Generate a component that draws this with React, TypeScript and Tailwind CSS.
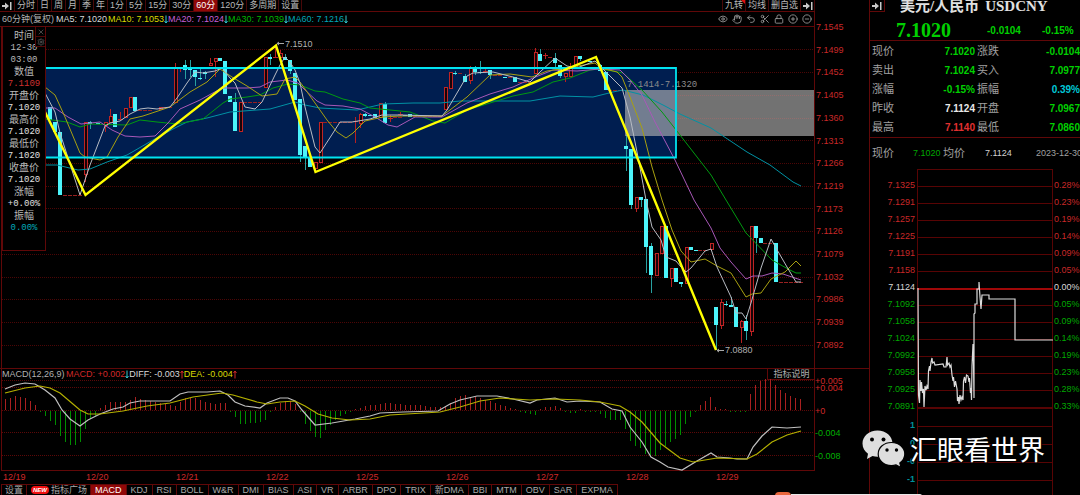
import { CircleMinus, CirclePlus, Eye, Hand, Lock, Scissors, Settings, Undo2, X } from 'lucide-react';

const PERIODS = ['分时', '日', '周', '月', '季', '年', '1分', '5分', '15分', '30分', '60分', '120分', '多周期', '设置'];

const AVERAGES = [
  { label: 'MA5: 7.1020', color: 'text-[#d8d8d8]', arrow: false },
  { label: 'MA10: 7.1053', color: 'text-[#d8d800]', arrow: true },
  { label: 'MA20: 7.1024', color: 'text-[#c860d8]', arrow: true },
  { label: 'MA30: 7.1039', color: 'text-[#00b800]', arrow: true },
  { label: 'MA60: 7.1216', color: 'text-[#00a8b8]', arrow: true },
];

const TOOLS = [
  { name: '显示', Icon: Eye },
  { name: '拖动', Icon: Hand },
  { name: '撤销', Icon: Undo2 },
  { name: '剪切', Icon: Scissors },
  { name: '锁定', Icon: Lock },
  { name: '放大', Icon: CirclePlus },
  { name: '缩小', Icon: CircleMinus },
];

const PRICE_AXIS = [
  '7.1545', '7.1499', '7.1452', '7.1405', '7.1360', '7.1313', '7.1266', '7.1219',
  '7.1173', '7.1126', '7.1079', '7.1032', '7.0986', '7.0939', '7.0892',
];

const GRID_Y = [49, 72, 95, 118, 140, 163, 186, 208, 231, 254, 277, 299, 322, 345];

const CURSOR_INFO = [
  { text: '时间', color: 'text-[#b8b8b8]' },
  { text: '12-30', color: 'text-[#b8b8b8]' },
  { text: '03:00', color: 'text-[#b8b8b8]' },
  { text: '数值', color: 'text-[#b8b8b8]' },
  { text: '7.1109', color: 'text-[#d03030]' },
  { text: '开盘价', color: 'text-[#b8b8b8]' },
  { text: '7.1020', color: 'text-[#e0e0e0]' },
  { text: '最高价', color: 'text-[#b8b8b8]' },
  { text: '7.1020', color: 'text-[#e0e0e0]' },
  { text: '最低价', color: 'text-[#b8b8b8]' },
  { text: '7.1020', color: 'text-[#e0e0e0]' },
  { text: '收盘价', color: 'text-[#b8b8b8]' },
  { text: '7.1020', color: 'text-[#e0e0e0]' },
  { text: '涨幅', color: 'text-[#b8b8b8]' },
  { text: '+0.00%', color: 'text-[#e0e0e0]' },
  { text: '振幅', color: 'text-[#b8b8b8]' },
  { text: '0.00%', color: 'text-[#00a8b8]' },
];

// x, body top, body bottom, wick top, wick bottom
type Candle = [number, number, number, number, number];

const FALLING: Candle[] = [
  [50, 107, 120, 107, 120], [55, 122, 132, 122, 132], [60, 132, 195, 132, 195], [90, 122, 124, 121, 129],
  [98, 123, 124, 123, 124], [115, 114, 127, 114, 127], [135, 97, 111, 97, 111], [185, 65, 70, 60, 79],
  [190, 69, 70, 60, 77], [195, 70, 77, 70, 86], [200, 78, 79, 67, 80], [205, 72, 74, 71, 79],
  [220, 58, 61, 58, 61], [225, 61, 94, 61, 94], [230, 96, 102, 96, 102], [235, 102, 131, 93, 131],
  [270, 57, 59, 54, 65], [285, 57, 60, 54, 60], [290, 60, 71, 60, 74], [295, 73, 100, 73, 100],
  [300, 99, 155, 99, 162], [305, 146, 157, 146, 170], [310, 157, 167, 157, 167], [365, 114, 116, 113, 117],
  [370, 115, 116, 115, 116], [375, 114, 118, 114, 118], [385, 104, 123, 102, 123], [405, 115, 116, 115, 116],
  [410, 114, 117, 114, 117], [455, 73, 74, 71, 75], [465, 76, 82, 74, 82], [475, 68, 72, 66, 75],
  [480, 72, 73, 61, 74], [490, 70, 75, 70, 79], [505, 77, 78, 77, 78], [515, 77, 82, 77, 82],
  [540, 54, 61, 49, 61], [555, 58, 63, 53, 67], [560, 65, 76, 65, 78], [580, 56, 59, 56, 61],
  [590, 61, 62, 61, 62], [600, 65, 71, 64, 71], [606, 72, 90, 72, 90], [626, 146, 149, 135, 171],
  [631, 149, 205, 149, 209], [641, 197, 200, 197, 207], [646, 199, 247, 199, 273], [651, 246, 275, 243, 293],
  [666, 226, 278, 226, 278], [676, 268, 282, 268, 282], [681, 282, 284, 282, 287], [691, 247, 250, 247, 250],
  [696, 250, 251, 250, 251], [716, 307, 325, 307, 350], [726, 304, 305, 301, 306], [731, 305, 307, 297, 307],
  [736, 307, 327, 307, 327], [746, 321, 331, 315, 340], [756, 226, 238, 226, 253], [761, 238, 243, 238, 243],
  [776, 243, 282, 243, 282],
];

const RISING: Candle[] = [
  [85, 122, 174, 122, 182], [105, 122, 125, 122, 132], [110, 116, 122, 109, 122], [120, 119, 120, 112, 120],
  [125, 108, 117, 108, 117], [130, 97, 107, 97, 107], [160, 107, 109, 107, 109], [175, 67, 102, 63, 102],
  [180, 67, 68, 67, 72], [210, 63, 65, 58, 66], [215, 58, 61, 58, 77], [240, 102, 131, 102, 131],
  [265, 57, 87, 57, 87], [275, 57, 58, 45, 58], [280, 53, 57, 50, 60], [315, 162, 168, 162, 168],
  [320, 122, 162, 122, 162], [355, 121, 122, 117, 143], [360, 114, 123, 113, 128], [380, 103, 117, 103, 117],
  [390, 118, 119, 115, 122], [400, 114, 115, 112, 116], [445, 87, 109, 87, 109], [450, 72, 88, 72, 88],
  [470, 68, 80, 66, 84], [485, 71, 72, 68, 73], [535, 52, 73, 48, 73], [545, 55, 56, 53, 59],
  [565, 73, 76, 73, 82], [570, 67, 76, 63, 76], [575, 56, 67, 56, 67], [636, 197, 208, 197, 212],
  [656, 253, 275, 253, 275], [661, 226, 253, 226, 253], [671, 268, 278, 268, 287], [686, 247, 283, 247, 283],
  [711, 243, 249, 243, 249], [721, 302, 325, 299, 329], [741, 321, 327, 320, 343], [751, 226, 331, 226, 336],
];

// runs of unchanged prices: x start, x end, y
const FLAT = [
  [63, 82, 195], [138, 153, 110], [163, 173, 107], [243, 262, 102], [323, 352, 122], [393, 403, 117],
  [413, 442, 116], [458, 463, 73], [493, 503, 75], [508, 513, 77], [518, 531, 82], [548, 553, 57],
  [608, 623, 90], [698, 708, 250], [763, 774, 243], [779, 803, 282],
];

const MA_LINES = [
  {
    stroke: '#0092a4',
    points:
      '45,165 57,165 78,170 90,169 107,162 127,155 153,140 173,129 187,122 207,118 230,112 270,109 295,102 305,105 320,108 357,110 383,104 413,103 440,103 460,101 490,101 530,101 560,96 593,97 613,92 623,90 643,95 663,105 680,114 711,128 747,152 770,165 793,182 801,186',
  },
  {
    stroke: '#009a10',
    points:
      '45,119 67,122 80,127 90,124 127,125 140,120 157,122 177,124 203,119 223,103 230,99 247,97 260,95 273,88 288,84 300,85 315,91 325,92 343,99 360,103 370,108 410,112 433,121 445,123 467,110 490,103 513,96 533,92 553,82 570,78 590,70 600,69 613,71 623,73 642,90 662,112 680,135 711,175 726,200 746,233 772,260 788,269 796,273 801,273',
  },
  {
    stroke: '#a858b8',
    points:
      '45,108 55,108 68,117 81,124 100,122 112,130 125,136 140,137 155,136 168,123 180,109 200,100 222,88 247,88 260,87 270,82 287,80 298,83 305,90 317,101 325,105 343,106 360,109 375,117 388,125 397,127 415,117 442,117 467,103 490,94 513,87 533,78 553,70 577,71 600,69 620,70 630,80 642,95 655,122 675,160 694,200 711,228 720,248 731,262 746,279 753,276 762,276 772,273 783,274 801,280',
  },
  {
    stroke: '#a8a010',
    points:
      '45,87 55,95 65,117 80,153 85,157 100,160 107,157 118,137 130,119 143,116 170,107 190,92 207,82 220,69 232,77 247,86 262,96 277,94 285,79 295,77 300,82 315,103 327,120 337,132 346,138 353,133 365,121 383,117 400,116 442,116 467,97 490,75 510,74 532,77 547,71 567,68 595,63 601,68 617,72 622,77 630,97 642,128 652,167 662,200 672,230 681,251 691,262 705,259 717,266 731,273 746,297 752,294 761,293 771,279 785,272 796,261 801,266',
  },
  {
    stroke: '#b8bcc4',
    points:
      '45,93 55,112 60,133 80,195 90,165 105,126 110,123 120,121 130,114 140,109 148,108 157,109 170,107 177,98 187,83 195,72 203,73 215,71 222,68 230,78 235,83 240,95 245,107 255,109 262,102 275,75 280,65 285,57 290,62 295,70 300,83 305,107 315,147 320,153 333,133 340,122 352,122 370,119 382,115 400,115 442,116 447,110 467,76 473,73 493,72 513,77 530,82 540,72 555,58 567,66 577,68 595,61 601,67 622,88 630,117 638,157 646,200 652,227 661,240 666,257 676,261 681,267 686,272 691,268 705,251 711,249 717,267 731,297 736,313 742,313 746,319 751,303 761,268 771,239 776,248 787,267 796,282 801,282',
  },
];

// histogram heights in 5px steps from the left edge
const MACD_BARS = [
  11, 12, 14, 13, 12, 9, 5, -1, -5, -10, -14, -25, -31, -34, -34, -31, -18, -8, -5, 2, 5, 8, 8, 8, 8, 10, 13, 11, 10, 9,
  8, 7, 6, 5, 4, 8, 12, 12, 12, 10, 8, 7, 6, 7, 7, -1, -6, -13, -13, -12, -12, -11, -9, -1, 3, 7, 9, 9, 6, -1, -13, -20,
  -26, -27, -19, -14, -9, -5, -3, -1, 1, 2, 4, 5, 5, 6, 7, 7, 6, 6, 5, 5, 5, 5, 4, 3, 3, 3, 4, 7, 12, 14, 15, 13, 13,
  12, 10, 9, 7, 5, 4, 2, 1, -1, -2, -3, -4, 1, 3, 3, 4, 2, -1, -2, -2, 1, -1, -1, -1, -3, -7, -9, -9, -9, -18, -30,
  -35, -37, -43, -46, -45, -39, -35, -31, -28, -24, -13, -6, -1, 5, 9, 13, 3, 1, 1, -1, -1, -1, -1, 16, 25, 29, 31, 31,
  25, 20, 17, 14, 12, 11,
];

const DIFF_POINTS =
  '5,389 15,385 25,383 35,384 45,390 55,398 62,410 70,419 80,426 88,420 100,414 113,409 123,407 130,403 140,401 170,401 180,394 188,392 207,392 220,391 228,395 235,402 245,406 260,408 267,403 280,398 288,398 295,401 302,410 315,425 332,423 355,419 370,416 380,413 403,412 438,411 450,404 460,400 477,396 497,396 513,399 530,403 537,400 555,398 567,402 580,401 600,402 612,409 622,411 630,427 642,442 651,457 660,462 668,467 682,470 697,461 711,453 717,457 730,458 737,459 747,459 753,447 762,436 772,427 787,428 801,427';

const DEA_POINTS =
  '5,393 25,388 40,386 50,388 60,393 80,410 88,414 100,414 123,411 147,406 170,403 193,397 222,393 233,395 257,402 267,404 280,402 295,401 305,406 318,414 332,418 350,420 370,419 390,415 440,412 460,407 480,401 500,398 530,400 555,399 580,400 600,402 620,406 630,412 642,422 660,443 680,458 693,462 717,458 747,459 757,454 772,442 787,435 801,431';

const MACD_AXIS = [
  { y: 380, label: '+0.005', fill: '#d02828' },
  { y: 387, label: '+0.004', fill: '#d02828' },
  { y: 410, label: '+0', fill: '#d02828' },
  { y: 432, label: '-0.004', fill: '#00b000' },
  { y: 455, label: '-0.008', fill: '#00b000' },
];

const DATES = ['12/19', '12/20', '12/21', '12/22', '12/25', '12/26', '12/27', '12/28', '12/29'];

const INDICATORS = [
  'MACD', 'KDJ', 'RSI', 'BOLL', 'W&R', 'DMI', 'BIAS', 'ASI', 'VR', 'ARBR', 'DPO', 'TRIX', '新DMA', 'BBI', 'MTM', 'OBV',
  'SAR', 'EXPMA',
];

const QUOTES = [
  ['现价', '7.1020', 'text-[#00d000]', '涨跌', '-0.0104', 'text-[#00d000]'],
  ['卖出', '7.1024', 'text-[#00d000]', '买入', '7.0977', 'text-[#00d000]'],
  ['涨幅', '-0.15%', 'text-[#00d000]', '振幅', '0.39%', 'text-[#00c8d8]'],
  ['昨收', '7.1124', 'text-[#e8e8e8]', '开盘', '7.0967', 'text-[#00d000]'],
  ['最高', '7.1140', 'text-[#e03030]', '最低', '7.0860', 'text-[#00d000]'],
];

const INTRADAY_AXIS = [
  ['7.1325', '0.28%', 'text-[#c82828]'],
  ['7.1291', '0.23%', 'text-[#c82828]'],
  ['7.1257', '0.19%', 'text-[#c82828]'],
  ['7.1225', '0.14%', 'text-[#c82828]'],
  ['7.1191', '0.09%', 'text-[#c82828]'],
  ['7.1158', '0.05%', 'text-[#c82828]'],
  ['7.1124', '0.00%', 'text-[#d8d8d8]'],
  ['7.1092', '0.05%', 'text-[#00a800]'],
  ['7.1058', '0.09%', 'text-[#00a800]'],
  ['7.1024', '0.14%', 'text-[#00a800]'],
  ['7.0992', '0.19%', 'text-[#00a800]'],
  ['7.0958', '0.23%', 'text-[#00a800]'],
  ['7.0925', '0.28%', 'text-[#00a800]'],
  ['7.0891', '0.33%', 'text-[#00a800]'],
];

const INTRADAY_POINTS =
  '918,287 918.500,394 919.500,402 920,379 921,390 921.500,381 922.500,392 923.500,388 924,406 925,385 926,389 927,385 928,388 928.500,370 929.500,365 930,370 931,361 932,357 932.500,362 934,361 935,364 943,363 944,366 946,366 947,356 947.500,364 949,362 950,366 951,364 952,374 953,380 953.500,376 954.500,386 955.500,380 957,388 957.500,400 958.500,396 959,403 960,394 961,399 962,396 963,399 963.500,380 964.500,376 965.500,382 966.500,374 968,375 969,381 969.500,377 970.500,392 971,387 971.500,399 972,365 973,343 973.500,360 974,397 974,313 975,312 975,303 977,303 977,288 979,288 979,281 980,296 981,308 982,294 989,294 989,298 1015,298 1015,339 1053,339';

const CollapseIcon = () => (
  <svg width="10" height="8" viewBox="0 0 10 8" fill="#c8c8c8">
    <path d="M0 3h3V0.5L7 4 3 7.5V5H0zM8 0h1.5v8H8z" />
  </svg>
);

const TrendArrow = ({ up = false }: { up?: boolean }) => (
  <svg width="4" height="9" viewBox="0 0 4 9" fill="none" stroke={up ? '#d02828' : '#30c8d0'} className="shrink-0 self-center">
    <path d={up ? 'M2 8.500V1M.5 3L2 1 3.500 3' : 'M2 .5V8M.5 6L2 8 3.500 6'} />
  </svg>
);

const CandleShape = ({ candle, up }: { candle: Candle; up: boolean }) => {
  const [x, top, bottom, high, low] = candle;
  const flat = bottom - top < 2;
  return (
    <g>
      <rect x={x} y={high} width="1" height={low - high} fill={up ? '#b82020' : '#28a0a0'} />
      {up && !flat ? (
        <rect x={x - 1} y={top} width="3" height={bottom - top} fill="#180408" stroke="#c02424" />
      ) : (
        <rect x={x - 2} y={top} width={up ? 5 : 4} height={bottom - top} fill={up ? '#c02424' : '#4cf4fa'} />
      )}
    </g>
  );
};

const PriceChart = () => (
  <svg viewBox="0 27 814 341" className="block w-full" role="img" aria-label="USDCNY 60分钟K线">
    <g shapeRendering="crispEdges">
      {GRID_Y.map((y) => (
        <line key={y} x1="2" x2="814" y1={y + 0.5} y2={y + 0.5} stroke="#4c0606" strokeDasharray="1 1" />
      ))}
      <rect x="46" y="68" width="630" height="89" fill="#001e50" />
      {FALLING.map((c) => (
        <CandleShape key={c[0]} candle={c} up={false} />
      ))}
      {RISING.map((c) => (
        <CandleShape key={c[0]} candle={c} up />
      ))}
      {FLAT.map(([from, to, y]) => (
        <line key={from} x1={from} x2={to} y1={y + 0.5} y2={y + 0.5} stroke="#982020" strokeDasharray="4 1" />
      ))}
    </g>
    <text x="627" y="87" fontSize="9" fill="#8c8c8c" className="font-['Liberation_Mono',monospace]">
      7.1414-7.1320
    </text>
    <rect x="625" y="90" width="189" height="46" fill="#b8b8b8" fillOpacity="0.62" />
    <g stroke="#a05858" strokeOpacity="0.25" strokeDasharray="1 1" shapeRendering="crispEdges">
      <line x1="676" x2="814" y1="95.5" y2="95.5" />
      <line x1="676" x2="814" y1="118.5" y2="118.5" />
    </g>
    {MA_LINES.map((line) => (
      <polyline key={line.stroke} points={line.points} fill="none" stroke={line.stroke} />
    ))}
    <path d="M46 68H676V157.5H46" fill="none" stroke="#00e4f0" strokeWidth="1.8" />
    <polyline
      points="45,112 85.5,195 276,45.5 315.5,172 596,57 716,350"
      fill="none"
      stroke="#ffff00"
      strokeWidth="2.4"
    />
    <g stroke="#a8a8a8">
      <path d="M277 43.5H284M279 42L277 43.5 279 45M717 350.5H724M719 349L717 350.5 719 352" fill="none" />
    </g>
    <g fontSize="9" fill="#b0b0b0">
      <text x="285" y="47">7.1510</text>
      <text x="725" y="353">7.0880</text>
    </g>
    <path d="M1.5 27V368" stroke="#600808" />
  </svg>
);

const MacdChart = () => (
  <svg viewBox="0 380 869 91" className="block w-full overflow-visible" role="img" aria-label="MACD">
    <g shapeRendering="crispEdges">
      {MACD_AXIS.map(({ y }) => (
        <line key={y} x1="2" x2="814" y1={y + 0.5} y2={y + 0.5} stroke="#5c0808" strokeDasharray="1 1" />
      ))}
      {MACD_BARS.map((value, i) => (
        <rect
          key={i}
          x={5 + i * 5}
          y={value > 0 ? 410 - value : 411}
          width="1"
          height={Math.abs(value)}
          fill={value > 0 ? '#a82020' : '#008c00'}
        />
      ))}
      <path d="M1.5 369V470.5H814.5V369" fill="none" stroke="#600808" />
    </g>
    <polyline points={DIFF_POINTS} fill="none" stroke="#c0c0c0" strokeWidth="1.2" />
    <polyline points={DEA_POINTS} fill="none" stroke="#b4b000" strokeWidth="1.2" />
    {MACD_AXIS.map(({ y, label, fill }) => (
      <text key={y} x="815" y={y + 4} fontSize="9" fill={fill}>
        {label}
      </text>
    ))}
  </svg>
);

const CursorPanel = () => (
  <aside className="absolute left-0.5 top-0 w-[44px] border border-t-0 border-[#600808] bg-black pb-4 pt-[3px] text-center leading-3">
    {CURSOR_INFO.map(({ text, color }, i) => (
      <div
        key={i}
        className={`${color} ${/\d/.test(text) ? "font-['Liberation_Mono',monospace] text-[9px]" : 'text-[10px]'} h-3 leading-3`}
      >
        {text}
      </div>
    ))}
    <div className="absolute right-0 top-0 flex flex-col text-[#686868]">
      <button aria-label="关闭" className="flex size-2.5 items-center justify-center border-b border-l border-[#500808] bg-black">
        <X size={8} />
      </button>
      <button aria-label="设置" className="flex size-2.5 items-center justify-center border-b border-l border-[#500808] bg-black">
        <Settings size={8} />
      </button>
    </div>
  </aside>
);

const Toolbar = () => (
  <nav className="mr-[54px] flex h-3 items-stretch border-b border-[#600808] text-[9px] leading-[11px] text-[#b8b8b8]">
    <button aria-label="收起" className="flex w-[15px] items-center justify-center border-r border-[#480808]">
      <CollapseIcon />
    </button>
    {PERIODS.map((p) => (
      <button
        key={p}
        className={`whitespace-nowrap border-r border-[#480808] px-0.5 ${p === '60分' ? 'bg-[#900808] text-white' : ''}`}
      >
        {p}
      </button>
    ))}
    <div className="ml-auto flex">
      <button className="relative border-x border-[#480808] px-0.5">
        九转
        <span className="absolute right-0 top-0 border-l-4 border-t-4 border-l-transparent border-t-[#e01010]" />
      </button>
      <button className="border-r border-[#480808] px-0.5">均线</button>
      <button className="border-r border-[#480808] px-0.5">删自选</button>
      <button aria-label="展开" className="flex w-3.5 items-center justify-center border-r border-[#480808]">
        <CollapseIcon />
      </button>
    </div>
  </nav>
);

const IndicatorTabs = () => (
  <nav className="flex h-[11px] text-[9px] leading-[11px] text-[#a8a8a8]">
    <button className="ml-px border-x border-t border-[#600808] px-[3px] leading-[10px]">设置</button>
    <button className="flex items-center gap-0.5 border-r border-t border-[#600808] pl-1 pr-[3px] leading-[10px]">
      <span className="rounded-sm bg-[#f01010] px-0.5 text-[6px] font-bold italic leading-[8px] text-white">NEW</span>
      指标广场
    </button>
    {INDICATORS.map((name) => (
      <button
        key={name}
        className={`whitespace-nowrap border-r border-t border-[#600808] px-1 leading-[10px] ${name === 'MACD' ? 'bg-[#900808] text-white' : ''}`}
      >
        {name}
      </button>
    ))}
  </nav>
);

const QuotePanel = () => (
  <section className="flex w-[211px] shrink-0 flex-col overflow-hidden border-l border-[#600808]">
    <header className="h-[41px] border-b border-[#600808]">
      <div className="flex h-3 items-center">
        <button aria-label="收起" className="flex h-3 w-[15px] items-center justify-center border-b border-r border-[#600808]">
          <CollapseIcon />
        </button>
        <h1 className="ml-[15px] flex gap-1.5 whitespace-nowrap font-['Liberation_Serif','Noto_Sans_CJK_SC',serif] text-[15px] font-bold leading-3 text-[#e0e0e0]">
          <span>美元/人民币</span>
          <span>USDCNY</span>
        </h1>
      </div>
      <div className="flex items-center pt-1.5 text-[10px] font-bold text-[#00d000]">
        <span className="w-[117px] pl-[26px] font-['Liberation_Serif',serif] text-[20px] leading-6">7.1020</span>
        <span className="w-[55px]">-0.0104</span>
        <span>-0.15%</span>
      </div>
    </header>
    <div className="border-b border-[#600808] pl-0.5 pt-px">
      <table className="w-full table-fixed border-collapse">
        <tbody>
          {QUOTES.map(([label, value, color, label2, value2, color2]) => (
            <tr key={label} className="h-[19px] text-[10px] leading-[19px]">
              <th className="w-6 p-0 text-left text-[11px] font-normal text-[#a0a0a0]">{label}</th>
              <td className={`w-[79px] p-0 text-right font-bold ${color}`}>{value}</td>
              <th className="w-[25px] p-0 pl-0.5 text-left text-[11px] font-normal text-[#a0a0a0]">{label2}</th>
              <td className={`p-0 text-right font-bold ${color2}`}>{value2}</td>
            </tr>
          ))}
        </tbody>
      </table>
    </div>
    <div className="flex h-[31px] items-center whitespace-nowrap pl-0.5 text-[9px] text-[#a0a0a0]">
      <span className="w-[41px] shrink-0 text-[11px]">现价</span>
      <span className="w-[30px] shrink-0 text-[#00a800]">7.1020</span>
      <span className="w-[42px] shrink-0 text-[11px]">均价</span>
      <span className="w-[51px] shrink-0 text-[#d0d0d0]">7.1124</span>
      <span>2023-12-30</span>
    </div>
    <div className="flex text-[9px]">
      <div className="w-[47px] pr-0.5 pt-2 text-right">
        {INTRADAY_AXIS.map(([price, , color]) => (
          <div key={price} className={`h-[17px] leading-[17px] ${color}`}>
            {price}
          </div>
        ))}
        <div className="pt-px font-bold text-[#00909c]">
          <div className="h-[18px] leading-[18px]">1</div>
          <div className="h-[18px] leading-[18px]">0</div>
          <div className="h-[18px] leading-[18px]">-0</div>
          <div className="h-[18px] leading-[18px]">-1</div>
        </div>
      </div>
      <svg viewBox="917 168 136 327" className="block min-w-0 flex-1" role="img" aria-label="分时走势">
        <g stroke="#580404" shapeRendering="crispEdges">
          {INTRADAY_AXIS.map(([price], i) => (
            <line key={price} x1="917" x2="1053" y1={185.5 + i * 17} y2={185.5 + i * 17} />
          ))}
          {[425, 443, 461, 479].map((y) => (
            <line key={y} x1="917" x2="1053" y1={y + 0.5} y2={y + 0.5} />
          ))}
          <path d="M917.5 495V168.5H1052.5V495" fill="none" />
          <line x1="917" x2="1053" y1="287.5" y2="287.5" stroke="#a00808" strokeWidth="2" />
          <line x1="917" x2="1053" y1="407" y2="407" strokeWidth="2" />
        </g>
        <polyline points={INTRADAY_POINTS} fill="none" stroke="#dcdcdc" strokeWidth="1.2" />
      </svg>
      <div className="w-[27px] pl-px pt-2">
        {INTRADAY_AXIS.map(([price, percent, color]) => (
          <div key={price} className={`h-[17px] leading-[17px] ${color}`}>
            {percent}
          </div>
        ))}
      </div>
    </div>
  </section>
);

const Watermark = () => (
  <div className="absolute bottom-7 right-[35px] flex items-center gap-1 text-white">
    <svg width="44" height="38" viewBox="0 0 44 38">
      <g fill="#dedede">
        <path d="M15.500 .5C7 .5 .5 6.200 .5 13.500c0 4.500 2.300 8 5.500 10.300L5 29l5.500-3c1.600.5 3.300.7 5 .7 8.300 0 15-5.700 15-13S24 .5 15.500 .5z" />
        <path
          d="M29.500 12.500c-7.500 0-13.300 5-13.300 11.500S22 35.500 29.500 35.500c1.500 0 3-.2 4.500-.6l5 2.600-1.200-4.500c3-2.200 5-5.300 5-9 0-6.500-6-11.500-13.300-11.500z"
          stroke="#000"
          strokeWidth="1.2"
        />
      </g>
      <g fill="#000">
        <circle cx="10" cy="9.500" r="2" />
        <circle cx="21.500" cy="9.500" r="2" />
        <circle cx="25" cy="20" r="1.700" />
        <circle cx="34.500" cy="20" r="1.700" />
      </g>
    </svg>
    <span className="font-['Noto_Sans_CJK_SC',sans-serif] text-[27px] leading-9 [text-shadow:0_0_2px_#000,1px_1px_1px_#000,-1px_-1px_1px_#000]">
      汇眼看世界
    </span>
  </div>
);

export default function App() {
  return (
    <div className="relative flex min-h-screen overflow-hidden bg-black font-['Liberation_Sans','Noto_Sans_CJK_SC',sans-serif]">
      <main className="min-w-0 flex-1">
        <Toolbar />
        <div className="flex">
          <div className="min-w-0 flex-1 border-r border-[#600808]">
            <div className="flex h-[15px] items-center whitespace-nowrap border-b border-[#600808] pl-0.5 text-[9px] leading-[14px]">
              <span className="w-[54px] text-[#b0b0b0]">60分钟(复权)</span>
              {AVERAGES.map(({ label, color, arrow }) => (
                <span key={label} className={`flex ${arrow ? 'w-[60px]' : 'w-[52px]'} ${color}`}>
                  {label}
                  {arrow && <TrendArrow />}
                </span>
              ))}
              <div className="ml-auto flex gap-1 pr-0.5 text-[#a0a0a0]">
                {TOOLS.map(({ name, Icon }) => (
                  <button key={name} aria-label={name}>
                    <Icon size={10} />
                  </button>
                ))}
              </div>
            </div>
            <div className="relative">
              <PriceChart />
              <CursorPanel />
            </div>
          </div>
          <div className="flex w-[54px] flex-col justify-between pb-[17px] pl-px pt-[9px] text-[9px] text-[#c82828]">
            {PRICE_AXIS.map((price) => (
              <span key={price} className="h-3 leading-3">
                {price}
              </span>
            ))}
          </div>
        </div>
        <section className="border-t border-[#600808]">
          <div className="mr-[54px] flex h-[11px] whitespace-nowrap pl-0.5 text-[9px] leading-[11px]">
            <span className="w-16 text-[#b0b0b0]">MACD(12,26,9)</span>
            <span className="text-[#d02828]">MACD: +0.002</span>
            <TrendArrow />
            <span className="text-[#d8d8d8]">DIFF: -0.003</span>
            <TrendArrow up />
            <span className="text-[#d8d800]">DEA: -0.004</span>
            <TrendArrow up />
            <button className="ml-auto w-12 border-b border-l border-[#600808] leading-[10px] text-[#b0b0b0]">指标说明</button>
          </div>
          <MacdChart />
        </section>
        <div className="mr-[54px] grid h-[13px] grid-cols-[83fr_90fr_90fr_90fr_90fr_90fr_90fr_90fr_99fr] pl-[3px] text-[9px] leading-[13px] text-[#d02828]">
          {DATES.map((date) => (
            <span key={date}>{date}</span>
          ))}
        </div>
        <IndicatorTabs />
      </main>
      <QuotePanel />
      <Watermark />
      <div className="absolute bottom-0 left-[775px] flex items-end">
        <span className="h-1 w-4 rounded-t-sm bg-[#e8663c]" />
        <span className="h-0.5 w-[131px] rounded-tr-sm bg-[#e8e8e8]" />
      </div>
    </div>
  );
}
